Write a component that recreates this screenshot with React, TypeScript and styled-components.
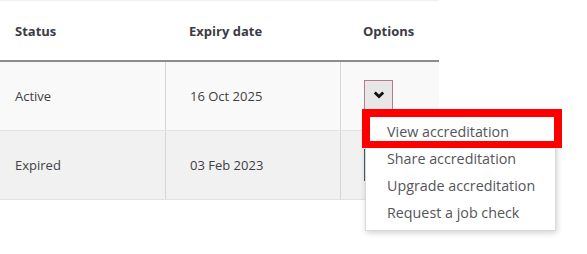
import React from 'react'
import styled, { createGlobalStyle } from 'styled-components'

const rows = [
  { status: 'Active', expiry: '16 Oct 2025', shade: '#f9f9f9', open: true },
  { status: 'Expired', expiry: '03 Feb 2023', shade: '#f1f1f1', open: false },
]

const menuItems = ['View accreditation', 'Share accreditation', 'Upgrade accreditation', 'Request a job check']

const Chevron = () => (
  <svg width="12" height="8" viewBox="0 0 12 8">
    <polyline points="1.8,1.6 6,5.6 10.2,1.6" fill="none" stroke="#111" strokeWidth="2.8" />
  </svg>
)

const App = () => {
  return (
    <Page>
      <Global />
      <Table>
        <HeadRow>
          <HeadCell $pad={15}>Status</HeadCell>
          <HeadCell $pad={24}>Expiry date</HeadCell>
          <HeadCell $pad={23}>Options</HeadCell>
        </HeadRow>
        {rows.map((r) => (
          <Row key={r.status} $bg={r.shade}>
            <Cell $pad={15}>{r.status}</Cell>
            <Cell $pad={24} $line>{r.expiry}</Cell>
            <Cell $pad={23} $line>
              <Anchor>
                <Toggle $focus={r.open}>
                  <Chevron />
                </Toggle>
                {r.open && (
                  <Menu>
                    {menuItems.map((m, i) => (
                      <Item key={m}>
                        {m}
                        {i === 0 && <Highlight />}
                      </Item>
                    ))}
                  </Menu>
                )}
              </Anchor>
            </Cell>
          </Row>
        ))}
      </Table>
    </Page>
  )
}

export default App

const Global = createGlobalStyle`
body {
  margin: 0;
  background: #fff;
  font-family: "Open Sans", "Noto Sans", sans-serif;
}
`

const Page = styled.div`
min-height: 254px;
background: #fff;
`

const Table = styled.div`
width: 439px;
border-top: 1px solid #efefef;
`

const HeadRow = styled.div`
display: grid;
grid-template-columns: 165px 175px 99px;
height: 59px;
border-bottom: 2px solid #8c8c8e;
`

const HeadCell = styled.div<{ $pad: number }>`
display: flex;
align-items: center;
padding-left: ${(p) => p.$pad}px;
font-size: 13px;
font-weight: 700;
color: #3b3b45;
`

const Row = styled.div<{ $bg: string }>`
display: grid;
grid-template-columns: 165px 175px 99px;
height: 68px;
background: ${(p) => p.$bg};
border-bottom: 1px solid #e2e2e2;
`

const Cell = styled.div<{ $pad: number; $line?: boolean }>`
display: flex;
align-items: center;
padding-left: ${(p) => p.$pad}px;
border-left: ${(p) => (p.$line ? '1px solid #d6d6d6' : 'none')};
font-size: 13px;
color: #3f3f47;
`

const Anchor = styled.div`
position: relative;
`

const Toggle = styled.div<{ $focus: boolean }>`
width: 29px;
height: 32px;
box-sizing: border-box;
display: flex;
align-items: center;
justify-content: center;
padding-bottom: 3px;
background: #e7e7e7;
border: 1px solid ${(p) => (p.$focus ? '#b57a94' : '#3e5a6c')};
`

const Menu = styled.div`
position: absolute;
top: calc(100% + 1px);
left: 1px;
width: 191px;
box-sizing: border-box;
padding: 4px 0;
background: #fff;
border: 1px solid #d9d9d9;
box-shadow: 1px 2px 6px rgba(0, 0, 0, 0.18);
z-index: 5;
`

const Item = styled.div`
position: relative;
height: 27px;
display: flex;
align-items: center;
padding-left: 21px;
font-size: 14.3px;
color: #55555c;
white-space: nowrap;
`

const Highlight = styled.div`
position: absolute;
top: -9px;
left: -4px;
right: -7px;
bottom: -3px;
border: 8px solid #ff0000;
border-bottom-width: 7px;
`
